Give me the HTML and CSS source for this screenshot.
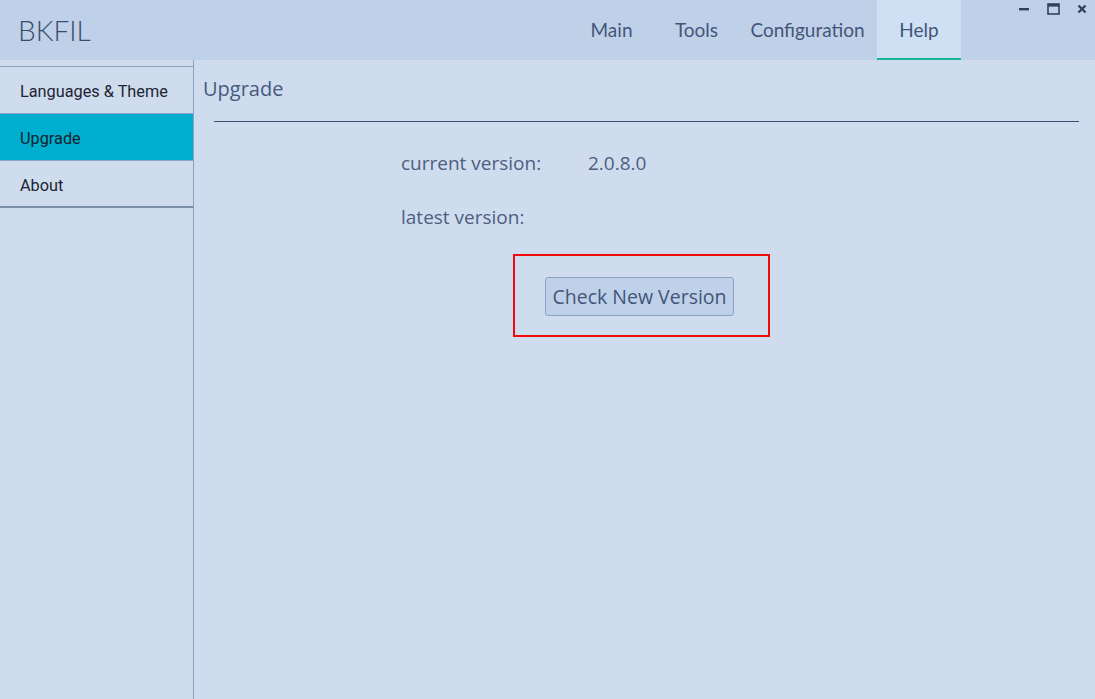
FILE: index.html
```html
<!DOCTYPE html>
<html>
<head>
<meta charset="utf-8">
<link rel="stylesheet" href="styles.css">
</head>
<body>
<div class="app">
  <header class="topbar">
    <div class="brand">BKFIL</div>
    <nav class="nav">
      <div class="tab tab-main">Main</div>
      <div class="tab tab-tools">Tools</div>
      <div class="tab tab-config">Configuration</div>
      <div class="tab tab-help active">Help</div>
    </nav>
    <div class="winctl">
      <svg class="wbtn" width="12" height="12" viewBox="0 0 12 12"><rect x="1" y="5" width="10" height="2.4" fill="#2f4163"/></svg>
      <svg class="wbtn" width="13" height="12" viewBox="0 0 13 12"><rect x="1" y="1" width="11" height="10" fill="none" stroke="#2f4163" stroke-width="1.6"/><rect x="1" y="1" width="11" height="2.6" fill="#2f4163"/></svg>
      <svg class="wbtn" width="10" height="12" viewBox="0 0 10 12"><path d="M1.5 2.5 L8.5 9.5 M8.5 2.5 L1.5 9.5" stroke="#2f4163" stroke-width="2.4"/></svg>
    </div>
  </header>
  <div class="body">
    <aside class="sidebar">
      <div class="menu">
        <div class="item">Languages &amp; Theme</div>
        <div class="item selected">Upgrade</div>
        <div class="item last">About</div>
      </div>
    </aside>
    <main class="content">
      <h1 class="title">Upgrade</h1>
      <div class="rule"></div>
      <div class="info">
        <div class="row"><span class="label">current version:</span><span class="value">2.0.8.0</span></div>
        <div class="row"><span class="label">latest version:</span><span class="value"></span></div>
      </div>
      <div class="highlight">
        <button class="check">Check New Version</button>
      </div>
    </main>
  </div>
</div>
</body>
</html>
```
FILE: styles.css
```css
* { box-sizing: border-box; }
html, body { margin: 0; padding: 0; }
body {
  width: 1095px;
  height: 699px;
  overflow: hidden;
  background: #cfdcee;
  font-family: "Open Sans", "Lato", sans-serif;
  color: #3e4f6d;
}
.app { display: flex; flex-direction: column; height: 699px; }
.topbar {
  height: 60px;
  background: #bfd1e8;
  display: flex;
  align-items: stretch;
  position: relative;
}
.brand {
  font-family: "Lato", sans-serif;
  font-weight: 300;
  font-size: 28px;
  color: #3a4c6c;
  padding-left: 18px;
  line-height: 60px;
  flex: 0 0 auto;
}
.nav {
  display: flex;
  margin-left: auto;
  margin-right: 134px;
  align-items: stretch;
}
.tab {
  font-family: "Lato", sans-serif;
  font-size: 19px;
  line-height: 60px;
  color: #44557a;
  text-align: center;
  height: 60px;
}
.tab-main { width: 87px; }
.tab-tools { width: 83px; }
.tab-config { width: 139px; }
.tab-help { width: 84px; }
.tab.active {
  background: #cde0f4;
  border-bottom: 2px solid #15b596;
}
.winctl {
  position: absolute;
  top: 3px;
  right: 8px;
  display: flex;
  gap: 17px;
  align-items: center;
}
.wbtn { display: block; }
.body { display: flex; flex: 1; }
.sidebar {
  width: 194px;
  border-right: 1px solid #8ca2c1;
  padding-top: 6px;
}
.menu { border-top: 1px solid #8ca2c1; }
.item {
  height: 47px;
  line-height: 49px;
  padding-left: 20px;
  font-family: "Roboto", sans-serif;
  font-size: 16.3px;
  color: #1d2433;
  border-bottom: 1px solid #8ca2c1;
}
.item.selected { background: #00afcf; color: #15222d; }
.item.last { border-bottom: 2px solid #7b8ea7; }
.content {
  flex: 1;
  padding-left: 9px;
  padding-right: 16px;
  display: flex;
  flex-direction: column;
}
.title {
  margin: 0;
  font-weight: 400;
  font-size: 20px;
  color: #485a7d;
  line-height: 20px;
  padding-top: 19px;
  height: 52px;
}
.rule {
  height: 1px;
  background: #3b4f6e;
  margin-left: 11px;
  margin-top: 9px;
}
.info {
  margin-left: 198px;
  margin-top: 28px;
  display: flex;
  flex-direction: column;
  gap: 28px;
}
.row { display: flex; height: 26px; line-height: 26px; font-size: 19px; color: #4d5e80; }
.label { width: 187px; }
.highlight {
  margin-left: 310px;
  margin-top: 24px;
  width: 257px;
  height: 83px;
  border: 2px solid #f20a0a;
  display: flex;
  align-items: center;
  justify-content: center;
  padding-right: 4px;
  padding-top: 2px;
}
.check {
  width: 189px;
  height: 39px;
  background: #bfd1e8;
  border: 1px solid #8ca2c4;
  border-radius: 3px;
  font-family: "Open Sans", sans-serif;
  font-size: 19.5px;
  color: #44557a;
  padding: 0;
}
```
